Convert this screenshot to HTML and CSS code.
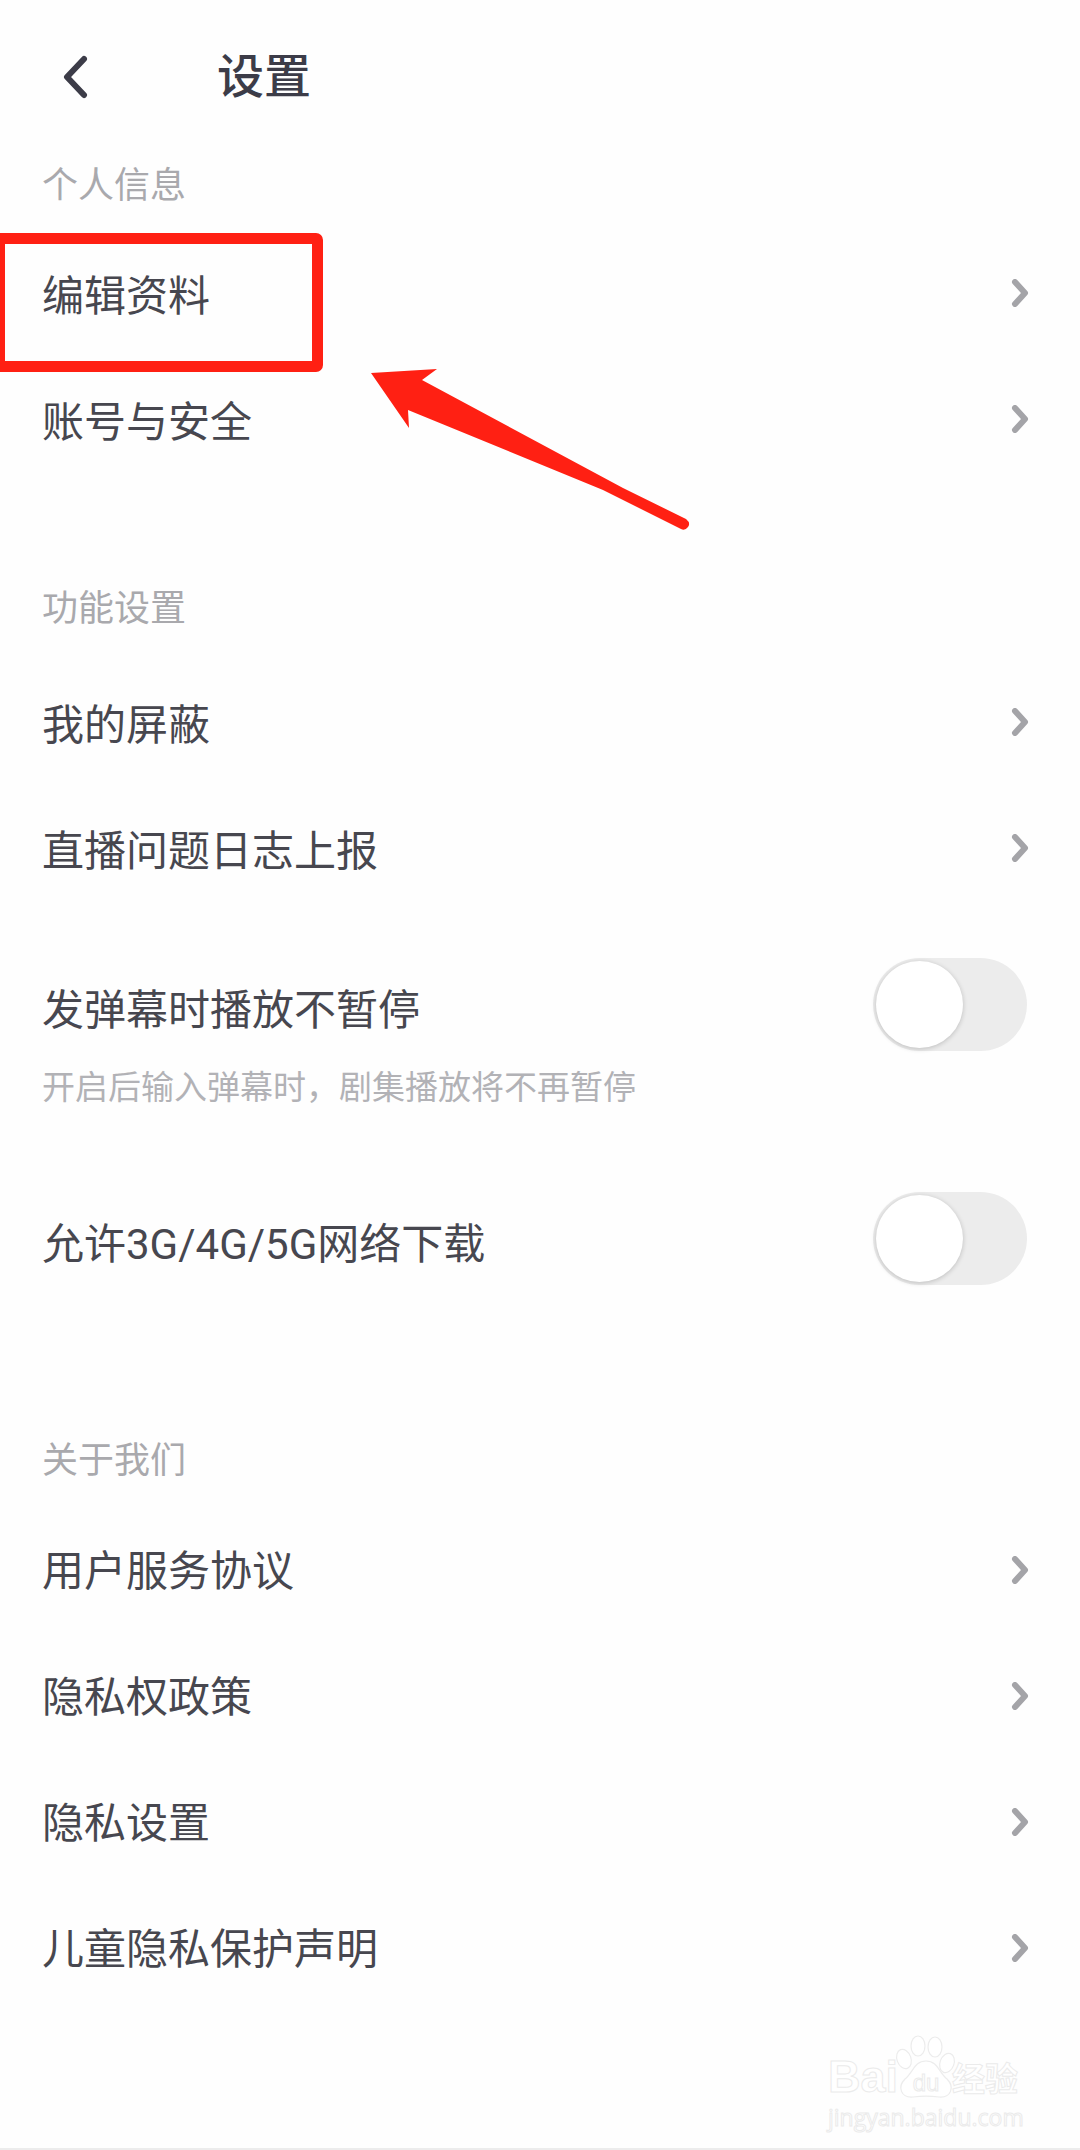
FILE: index.html
```html
<!DOCTYPE html>
<html lang="zh-CN">
<head>
    <meta charset="UTF-8">
    <meta name="viewport" content="width=device-width, initial-scale=1.0">
    <title>设置</title>
    <link rel="stylesheet" href="styles.css">
</head>
<body>
    <div class="screen">
        <header class="top-bar">
            <svg class="back-icon" width="26" height="44" viewBox="0 0 26 44">
                <path d="M22 4 L5 22 L22 40" fill="none" stroke="#3c3c48" stroke-width="6" stroke-linecap="round" stroke-linejoin="round"/>
            </svg>
            <h1>设置</h1>
        </header>

        <section class="group group-profile">
            <h2>个人信息</h2>
            <div class="row">
                <span>编辑资料</span>
                <svg class="chevron" width="18" height="28" viewBox="0 0 18 28"><path d="M4 3 L14 14 L4 25" fill="none" stroke="#a4a4a8" stroke-width="6" stroke-linecap="round" stroke-linejoin="round"/></svg>
            </div>
            <div class="row">
                <span>账号与安全</span>
                <svg class="chevron" width="18" height="28" viewBox="0 0 18 28"><path d="M4 3 L14 14 L4 25" fill="none" stroke="#a4a4a8" stroke-width="6" stroke-linecap="round" stroke-linejoin="round"/></svg>
            </div>
        </section>

        <section class="group group-features">
            <h2>功能设置</h2>
            <div class="row">
                <span>我的屏蔽</span>
                <svg class="chevron" width="18" height="28" viewBox="0 0 18 28"><path d="M4 3 L14 14 L4 25" fill="none" stroke="#a4a4a8" stroke-width="6" stroke-linecap="round" stroke-linejoin="round"/></svg>
            </div>
            <div class="row">
                <span>直播问题日志上报</span>
                <svg class="chevron" width="18" height="28" viewBox="0 0 18 28"><path d="M4 3 L14 14 L4 25" fill="none" stroke="#a4a4a8" stroke-width="6" stroke-linecap="round" stroke-linejoin="round"/></svg>
            </div>
            <div class="switch-row">
                <div class="switch-text">
                    <span>发弹幕时播放不暂停</span>
                    <p>开启后输入弹幕时，剧集播放将不再暂停</p>
                </div>
                <div class="switch"><div class="knob"></div></div>
            </div>
            <div class="switch-row">
                <div class="switch-text">
                    <span>允许3G/4G/5G网络下载</span>
                </div>
                <div class="switch"><div class="knob"></div></div>
            </div>
        </section>

        <section class="group group-about">
            <h2>关于我们</h2>
            <div class="row">
                <span>用户服务协议</span>
                <svg class="chevron" width="18" height="28" viewBox="0 0 18 28"><path d="M4 3 L14 14 L4 25" fill="none" stroke="#a4a4a8" stroke-width="6" stroke-linecap="round" stroke-linejoin="round"/></svg>
            </div>
            <div class="row">
                <span>隐私权政策</span>
                <svg class="chevron" width="18" height="28" viewBox="0 0 18 28"><path d="M4 3 L14 14 L4 25" fill="none" stroke="#a4a4a8" stroke-width="6" stroke-linecap="round" stroke-linejoin="round"/></svg>
            </div>
            <div class="row">
                <span>隐私设置</span>
                <svg class="chevron" width="18" height="28" viewBox="0 0 18 28"><path d="M4 3 L14 14 L4 25" fill="none" stroke="#a4a4a8" stroke-width="6" stroke-linecap="round" stroke-linejoin="round"/></svg>
            </div>
            <div class="row">
                <span>儿童隐私保护声明</span>
                <svg class="chevron" width="18" height="28" viewBox="0 0 18 28"><path d="M4 3 L14 14 L4 25" fill="none" stroke="#a4a4a8" stroke-width="6" stroke-linecap="round" stroke-linejoin="round"/></svg>
            </div>
        </section>

        <!-- red annotation drawn over the screenshot -->
        <div class="mark-box"></div>
        <svg class="mark-arrow" width="340" height="180" viewBox="360 360 340 180">
            <path d="M371 373 L437 369 L422 380 L623 488 L686 519 Q691 523 688 527 Q685 531 681 529 L603 490 L408 410 L409 428 Z" fill="#ff2013"/>
        </svg>

        <div class="watermark">
            <svg class="paw" width="62" height="66" viewBox="0 0 62 66">
                <g fill="#fff" stroke="#ececec" stroke-width="1.2">
                    <ellipse cx="9" cy="24" rx="7" ry="10" transform="rotate(-20 9 24)"/>
                    <ellipse cx="23" cy="11" rx="7" ry="10"/>
                    <ellipse cx="40" cy="12" rx="7" ry="10"/>
                    <ellipse cx="52" cy="28" rx="7" ry="10" transform="rotate(20 52 28)"/>
                    <path d="M31 26 C43 26 44 38 52 44 C60 52 56 63 44 62 C36 61 26 61 18 62 C6 63 2 52 10 44 C18 38 19 26 31 26 Z"/>
                </g>
                <text class="paw-text" x="31" y="56" text-anchor="middle">du</text>
            </svg>
            <div class="wm-top"><span>Bai</span><span class="wm-gap"></span><span class="wm-cn">经验</span></div>
            <div class="wm-url">jingyan.baidu.com</div>
        </div>

        <div class="bottom-line"></div>
    </div>
</body>
</html>
```

FILE: styles.css
```css
* {
    margin: 0;
    padding: 0;
    box-sizing: border-box;
}

body {
    background-color: #fefefe;
    font-family: Roboto, "Noto Sans CJK SC", sans-serif;
}

.screen {
    position: relative;
    width: 1080px;
    height: 2150px;
    overflow: hidden;
    color: #47474f;
    font-size: 42px;
}

.top-bar {
    display: flex;
    align-items: center;
    height: 153px;
    padding-left: 62px;
    padding-bottom: 8px;
}

.back-icon {
    margin-top: 8px;
}

h1 {
    margin-left: 129px;
    font-size: 47px;
    font-weight: 500;
    color: #3c3c48;
}

h2 {
    height: 60px;
    padding: 6px 0 0 42px;
    line-height: 54px;
    font-size: 36px;
    font-weight: 400;
    color: #a9a9ad;
}

.group-profile h2 {
    margin-bottom: 20px;
}

.group-features {
    margin-top: 91px;
}

.group-features h2 {
    margin-bottom: 26px;
}

.group-about {
    margin-top: 46px;
}

.group-about h2 {
    margin-bottom: 22px;
}

.row {
    display: flex;
    align-items: center;
    justify-content: space-between;
    height: 126px;
    padding: 0 51px 0 42px;
}

.row span {
    margin-bottom: 8px;
}

.group-about .row span {
    margin-bottom: 11px;
}

.chevron {
    margin-bottom: 7px;
}

.switch-row {
    display: flex;
    justify-content: space-between;
    align-items: flex-start;
    height: 234px;
    padding: 67px 53px 0 42px;
}

.switch-row span {
    display: block;
    line-height: 60px;
}

.switch-row p {
    margin-top: 23px;
    line-height: 48px;
    font-size: 33px;
    color: #b2b2b6;
}

.switch {
    width: 154px;
    height: 93px;
    margin-top: -23px;
    padding: 3px;
    border-radius: 47px;
    background-color: #ececec;
}

.knob {
    width: 87px;
    height: 87px;
    border-radius: 50%;
    background-color: #fff;
    box-shadow: 0 1px 5px rgba(0, 0, 0, 0.2);
}

.mark-box {
    position: absolute;
    left: -6px;
    top: 233px;
    width: 329px;
    height: 139px;
    border: 11px solid #ff2013;
    border-radius: 7px;
}

.mark-arrow {
    position: absolute;
    left: 360px;
    top: 360px;
}

.watermark {
    position: absolute;
    left: 828px;
    top: 2035px;
    width: 200px;
    color: #fff;
    -webkit-text-stroke: 1px #ebebeb;
}

.paw {
    position: absolute;
    left: 67px;
    top: 0;
}

.paw-text {
    font-family: "Liberation Sans", sans-serif;
    font-size: 24px;
    fill: #fff;
    stroke: #ebebeb;
    stroke-width: 1px;
}

.wm-top {
    display: flex;
    align-items: center;
    height: 34px;
    margin-top: 25px;
    font-family: "Liberation Sans", "Noto Sans CJK SC", sans-serif;
    font-size: 45px;
    font-weight: 700;
}

.wm-gap {
    width: 54px;
}

.wm-cn {
    font-size: 33px;
}

.wm-url {
    margin-top: 8px;
    font-family: "Open Sans", sans-serif;
    font-size: 23px;
    line-height: 30px;
    white-space: nowrap;
}

.bottom-line {
    position: absolute;
    left: 0;
    bottom: 0;
    width: 100%;
    height: 2px;
    background-color: #ececec;
}
```
